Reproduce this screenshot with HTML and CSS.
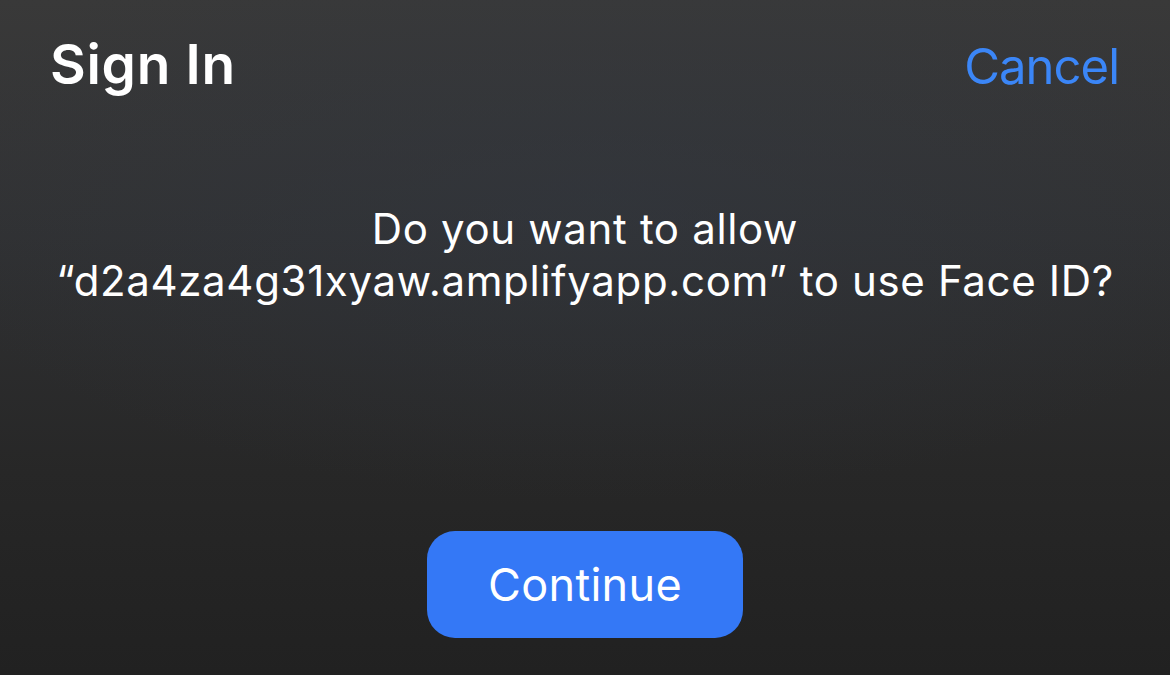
FILE: index.html
```html
<!DOCTYPE html>
<html lang="en">
<head>
<meta charset="utf-8">
<title>Sign In</title>
<link rel="stylesheet" href="styles.css">
</head>
<body>
<div class="sheet">
  <header class="bar">
    <h1 class="title">Sign In</h1>
    <a class="cancel" href="#">Cancel</a>
  </header>
  <p class="prompt">Do you want to allow<br>“d2a4za4g31xyaw.amplifyapp.com” to use Face ID?</p>
  <div class="actions">
    <button class="continue" type="button">Continue</button>
  </div>
</div>
</body>
</html>
```

FILE: styles.css
```css
html, body {
  margin: 0;
  padding: 0;
  height: 100%;
}
body {
  background:
    radial-gradient(ellipse 700px 300px at 600px 200px, rgba(50, 56, 66, 0.45), rgba(50, 56, 66, 0) 100%),
    linear-gradient(180deg, #393939 0%, #303133 35%, #272727 70%, #212121 100%);
  font-family: Inter, "Open Sans", "Liberation Sans", sans-serif;
  color: #ffffff;
  overflow: hidden;
}
.sheet {
  display: flex;
  flex-direction: column;
  height: 675px;
  box-sizing: border-box;
}
.bar {
  display: flex;
  justify-content: space-between;
  align-items: baseline;
  padding: 37px 51px 0 50px;
}
.title {
  margin: 0;
  font-size: 55px;
  line-height: 1;
  font-weight: 600;
  letter-spacing: 0.7px;
}
.cancel {
  color: #3b86f7;
  text-decoration: none;
  font-size: 49px;
  line-height: 1;
  font-weight: 400;
  letter-spacing: -1px;
}
.prompt {
  margin: 111px 0 0 0;
  text-align: center;
  font-size: 42px;
  line-height: 52px;
  font-weight: 400;
  letter-spacing: 0.65px;
}
.actions {
  display: flex;
  justify-content: center;
  margin-top: auto;
  padding-bottom: 37px;
}
.continue {
  width: 316px;
  height: 107px;
  border: none;
  border-radius: 28px;
  background: #3478f6;
  color: #ffffff;
  font-family: inherit;
  font-size: 45px;
  font-weight: 400;
  letter-spacing: 0.3px;
}
```
